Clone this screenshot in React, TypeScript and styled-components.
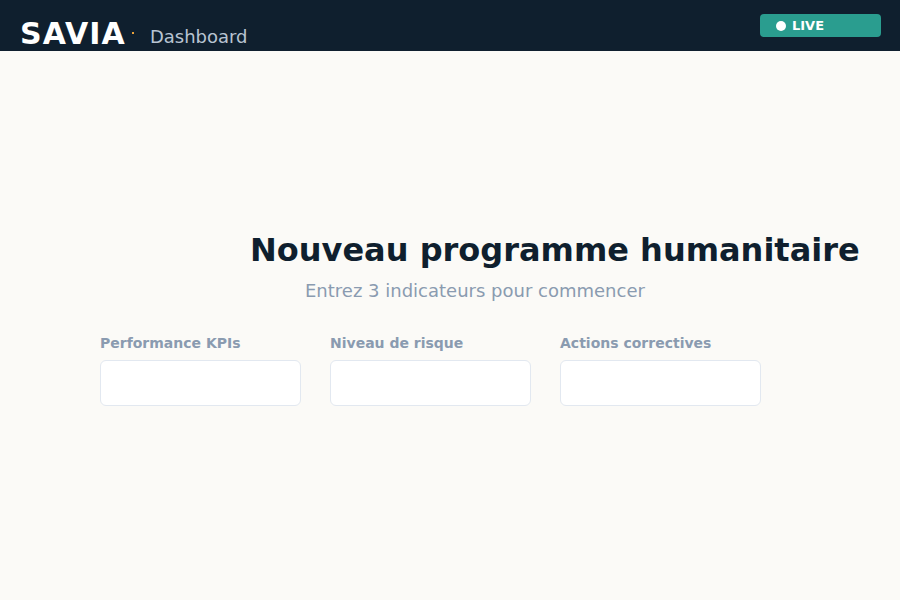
import styled, { createGlobalStyle } from 'styled-components';

const GlobalStyle = createGlobalStyle`
  html, body {
    margin: 0;
    padding: 0;
    background: #fbfaf7;
    font-family: "DejaVu Sans", sans-serif;
  }
`;

const Page = styled.div`
  width: 900px;
  height: 600px;
  background: #fbfaf7;
  display: flex;
  flex-direction: column;
`;

const TopBar = styled.header`
  height: 51px;
  background: #0f1f2e;
  display: flex;
  align-items: flex-start;
  justify-content: space-between;
  padding: 0 19px 0 20px;
  box-sizing: border-box;
`;

const Brand = styled.div`
  display: flex;
  align-items: baseline;
  padding-top: 16px;
`;

const Logo = styled.span`
  font-size: 30px;
  font-weight: 700;
  color: #ffffff;
  letter-spacing: 1.1px;
  line-height: 36px;
`;

const Dot = styled.span`
  width: 2px;
  height: 2px;
  background: #e9a23b;
  margin: 0 16px 0 6px;
  align-self: center;
  transform: translateY(-1px);
`;

const Section = styled.span`
  font-size: 18px;
  color: #b8c4d2;
  position: relative;
  top: -1px;
`;

const LiveBadge = styled.div`
  margin-top: 14px;
  width: 121px;
  height: 23px;
  border-radius: 4px;
  background: #2a9d8f;
  display: flex;
  align-items: center;
  padding-left: 16px;
  box-sizing: border-box;
  gap: 6px;
  color: #ffffff;
  font-size: 13px;
  font-weight: 700;
`;

const LiveDot = styled.span`
  width: 10px;
  height: 10px;
  border-radius: 50%;
  background: #ffffff;
`;

const Main = styled.main`
  flex: 1;
  display: flex;
  flex-direction: column;
  padding: 180px 0 0 100px;
`;

const Title = styled.h1`
  margin: 0 0 0 150px;
  font-size: 32px;
  font-weight: 700;
  color: #0f1f2e;
  line-height: 38px;
  white-space: nowrap;
`;

const Subtitle = styled.p`
  margin: 11px 0 0 205px;
  font-size: 18px;
  color: #8a9bb0;
  line-height: 22px;
`;

const Fields = styled.div`
  display: grid;
  grid-template-columns: repeat(3, 201px);
  column-gap: 29px;
  margin-top: 33px;
`;

const Field = styled.label`
  display: flex;
  flex-direction: column;
  gap: 9px;
`;

const Label = styled.span`
  font-size: 14px;
  font-weight: 700;
  color: #8a9bb0;
  line-height: 16px;
`;

const Input = styled.input`
  height: 46px;
  box-sizing: border-box;
  border: 1px solid #e2e8f0;
  border-radius: 6px;
  background: #ffffff;
  outline: none;
  padding: 0 12px;
  font-family: inherit;
  font-size: 14px;
`;

const fields = ['Performance KPIs', 'Niveau de risque', 'Actions correctives'];

export default function App() {
  return (
    <>
      <GlobalStyle />
      <Page>
        <TopBar>
          <Brand>
            <Logo>SAVIA</Logo>
            <Dot />
            <Section>Dashboard</Section>
          </Brand>
          <LiveBadge>
            <LiveDot />
            LIVE
          </LiveBadge>
        </TopBar>
        <Main>
          <Title>Nouveau programme humanitaire</Title>
          <Subtitle>Entrez 3 indicateurs pour commencer</Subtitle>
          <Fields>
            {fields.map((f) => (
              <Field key={f}>
                <Label>{f}</Label>
                <Input />
              </Field>
            ))}
          </Fields>
        </Main>
      </Page>
    </>
  );
}
